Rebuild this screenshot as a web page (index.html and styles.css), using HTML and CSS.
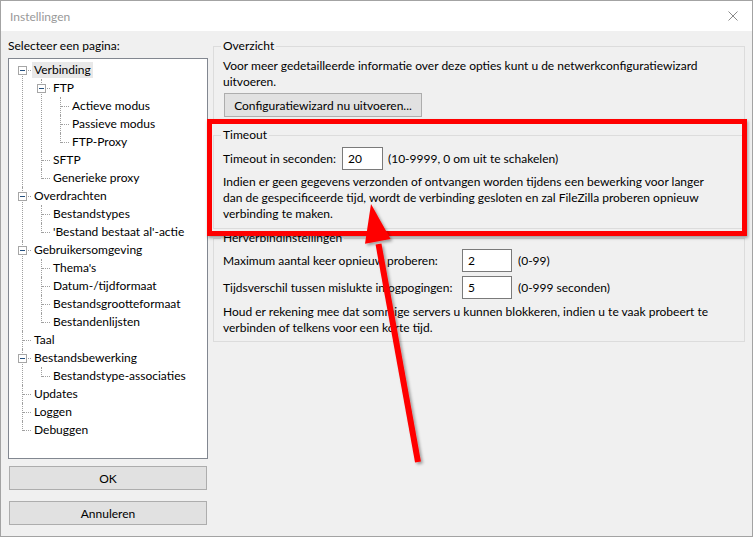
FILE: index.html
```html
<!DOCTYPE html>
<html lang="nl">
<head>
<meta charset="utf-8">
<title>Instellingen</title>
<link rel="stylesheet" href="styles.css">
</head>
<body>
<div class="window">
  <div class="titlebar">
    <span class="title">Instellingen</span>
    <svg class="close" width="10" height="10" viewBox="0 0 10 10"><path d="M0.5 0.5 L9.5 9.5 M9.5 0.5 L0.5 9.5" stroke="#8a8a8a" stroke-width="1" fill="none"/></svg>
  </div>
  <div class="content">
    <div class="leftcol">
      <div class="lefthead">Selecteer een pagina:</div>
      <div class="treebox">
        <ul class="tree root">
          <li><div class="row"><span class="tg"></span><span class="lbl sel">Verbinding</span></div>
            <ul>
              <li><div class="row"><span class="tg"></span><span class="lbl">FTP</span></div>
                <ul>
                  <li><div class="row"><span class="lbl">Actieve modus</span></div></li>
                  <li><div class="row"><span class="lbl">Passieve modus</span></div></li>
                  <li><div class="row"><span class="lbl">FTP-Proxy</span></div></li>
                </ul>
              </li>
              <li><div class="row"><span class="lbl">SFTP</span></div></li>
              <li><div class="row"><span class="lbl">Generieke proxy</span></div></li>
            </ul>
          </li>
          <li><div class="row"><span class="tg"></span><span class="lbl">Overdrachten</span></div>
            <ul>
              <li><div class="row"><span class="lbl">Bestandstypes</span></div></li>
              <li><div class="row"><span class="lbl">'Bestand bestaat al'-actie</span></div></li>
            </ul>
          </li>
          <li><div class="row"><span class="tg"></span><span class="lbl">Gebruikersomgeving</span></div>
            <ul>
              <li><div class="row"><span class="lbl">Thema's</span></div></li>
              <li><div class="row"><span class="lbl">Datum-/tijdformaat</span></div></li>
              <li><div class="row"><span class="lbl">Bestandsgrootteformaat</span></div></li>
              <li><div class="row"><span class="lbl">Bestandenlijsten</span></div></li>
            </ul>
          </li>
          <li><div class="row"><span class="lbl">Taal</span></div></li>
          <li><div class="row"><span class="tg"></span><span class="lbl">Bestandsbewerking</span></div>
            <ul>
              <li><div class="row"><span class="lbl">Bestandstype-associaties</span></div></li>
            </ul>
          </li>
          <li><div class="row"><span class="lbl">Updates</span></div></li>
          <li><div class="row"><span class="lbl">Loggen</span></div></li>
          <li><div class="row"><span class="lbl">Debuggen</span></div></li>
        </ul>
      </div>
      <button class="btn btn-ok">OK</button>
      <button class="btn btn-cancel">Annuleren</button>
    </div>
    <div class="rightcol">
      <fieldset class="group g-overview">
        <legend>Overzicht</legend>
        <p class="text">Voor meer gedetailleerde informatie over deze opties kunt u de netwerkconfiguratiewizard<br>uitvoeren.</p>
        <button class="btn wizard">Configuratiewizard nu uitvoeren...</button>
      </fieldset>
      <fieldset class="group g-timeout">
        <legend>Timeout</legend>
        <div class="form timeout-form">
          <span class="nw">Timeout in seconden:</span>
          <input class="num" type="text" value="20">
          <span class="nw">(10-9999, 0 om uit te schakelen)</span>
        </div>
        <p class="text">Indien er geen gegevens verzonden of ontvangen worden tijdens een bewerking voor langer<br>dan de gespecificeerde tijd, wordt de verbinding gesloten en zal FileZilla proberen opnieuw<br>verbinding te maken.</p>
      </fieldset>
      <fieldset class="group g-reconnect">
        <legend>Herverbindinstellingen</legend>
        <div class="form reconnect-form">
          <span class="nw">Maximum aantal keer opnieuw proberen:</span>
          <input class="num" type="text" value="2">
          <span class="nw">(0-99)</span>
          <span class="nw">Tijdsverschil tussen mislukte inlogpogingen:</span>
          <input class="num" type="text" value="5">
          <span class="nw">(0-999 seconden)</span>
        </div>
        <p class="text">Houd er rekening mee dat sommige servers u kunnen blokkeren, indien u te vaak probeert te<br>verbinden of telkens voor een korte tijd.</p>
      </fieldset>
    </div>
  </div>
</div>
<div class="highlight"></div>
<svg class="arrow" width="753" height="537" viewBox="0 0 753 537">
  <defs>
    <filter id="sh" x="-20%" y="-20%" width="140%" height="140%">
      <feDropShadow dx="2" dy="2" stdDeviation="1.5" flood-color="#000" flood-opacity="0.35"/>
    </filter>
  </defs>
  <g filter="url(#sh)" fill="#ff0000" stroke="none">
    <line x1="418" y1="462" x2="378.5" y2="244" stroke="#ff0000" stroke-width="6"/>
    <polygon points="371,204 390.6,239.1 365,243.7"/>
  </g>
</svg>
</body>
</html>
```
FILE: styles.css
```css
html, body {
  margin: 0;
  padding: 0;
}
body {
  font-family: "Lato", "Noto Sans", "Liberation Sans", sans-serif;
  font-size: 12px;
  color: #000;
  background: #fff;
  width: 753px;
  height: 537px;
  overflow: hidden;
}
.window {
  width: 753px;
  height: 537px;
  box-sizing: border-box;
  border: 1px solid #a3a3a3;
  background: #f0f0f0;
  display: flex;
  flex-direction: column;
}
.titlebar {
  height: 30px;
  flex: none;
  background: #fff;
  display: flex;
  align-items: center;
  justify-content: space-between;
  padding: 0 14px 0 9px;
}
.title {
  color: #999;
  font-size: 12px;
}
.close {
  display: block;
}
.content {
  display: flex;
  padding: 7px 0 0 7px;
  gap: 5px;
}
.leftcol {
  width: 200px;
  flex: none;
  display: flex;
  flex-direction: column;
}
.lefthead {
  line-height: 16px;
}
.treebox {
  margin-top: 4px;
  height: 401px;
  box-sizing: border-box;
  border: 1px solid #828790;
  background: #fff;
  padding-top: 2px;
}
.tree, .tree ul {
  list-style: none;
  margin: 0;
  padding: 0;
}
.tree ul {
  margin-left: 19px;
}
.tree li {
  position: relative;
}
.tree li::before {
  content: "";
  position: absolute;
  left: 13px;
  top: 0;
  bottom: 0;
  border-left: 1px dotted #a0a0a0;
}
.tree li:last-child::before {
  bottom: auto;
  height: 10px;
}
.tree.root > li:first-child::before {
  top: 9px;
}
.row {
  position: relative;
  height: 18px;
  display: flex;
  align-items: center;
  padding-left: 23px;
}
.row::before {
  content: "";
  position: absolute;
  left: 14px;
  top: 9px;
  width: 8px;
  border-top: 1px dotted #a0a0a0;
}
.tg {
  position: absolute;
  left: 9px;
  top: 5px;
  width: 9px;
  height: 9px;
  box-sizing: border-box;
  border: 1px solid #a6a6a6;
  background: #fff;
  z-index: 1;
}
.tg::after {
  content: "";
  position: absolute;
  left: 1px;
  top: 3px;
  width: 5px;
  height: 1px;
  background: #25507e;
}
.lbl {
  padding: 0 2px;
  line-height: 16px;
  white-space: nowrap;
}
.lbl.sel {
  background: #e8e8e8;
}
.btn {
  font: inherit;
  color: #000;
  height: 24px;
  box-sizing: border-box;
  border: 1px solid #adadad;
  background: #e1e1e1;
  padding: 0;
  margin: 0;
}
.btn-ok {
  margin: 7px 1px 0;
}
.btn-cancel {
  margin: 11px 1px 0;
}
.rightcol {
  width: 532px;
  flex: none;
}
.group {
  border: 1px solid #dcdcdc;
  margin: 0;
  padding: 0 9px 5px;
  min-width: 0;
}
.group legend {
  padding: 0 2px;
  margin-left: -2px;
  line-height: 16px;
}
.g-overview {
  margin-bottom: 4px;
}
.g-timeout {
  margin-bottom: 1px;
  padding-bottom: 6px;
}
.text {
  margin: 0;
  line-height: 16px;
  white-space: nowrap;
}
.nw {
  white-space: nowrap;
}
.g-overview .text {
  margin-top: 4px;
}
.wizard {
  display: block;
  margin: 3px 0 0 1px;
  width: 198px;
}
.form {
  display: grid;
  align-items: center;
}
.timeout-form {
  grid-template-columns: 114px 41px auto;
  column-gap: 5px;
  margin-top: 4px;
}
.g-timeout .text {
  margin-top: 4px;
}
.reconnect-form {
  grid-template-columns: 233px 50px auto;
  column-gap: 6px;
  row-gap: 4px;
  margin-top: 3px;
}
.g-reconnect .text {
  margin-top: 5px;
}
.num {
  font: inherit;
  color: #000;
  height: 23px;
  box-sizing: border-box;
  border: 1px solid #7a7a7a;
  background: #fff;
  padding: 0 0 0 5px;
  margin: 0;
  width: 100%;
  outline: none;
}
.highlight {
  position: absolute;
  left: 207px;
  top: 119px;
  width: 540px;
  height: 117px;
  box-sizing: border-box;
  border: 5px solid #ff0000;
  box-shadow: 1px 2px 3px rgba(0, 0, 0, 0.35);
}
.arrow {
  position: absolute;
  left: 0;
  top: 0;
  pointer-events: none;
}
```
